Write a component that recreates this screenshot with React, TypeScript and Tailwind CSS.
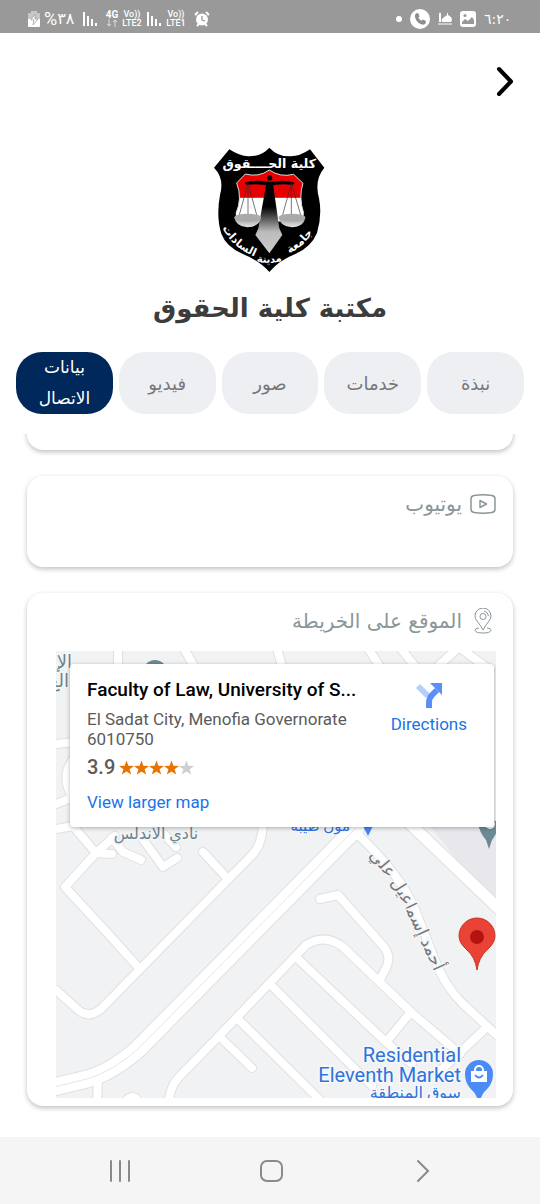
import React from "react";

const tabs = [
  { label: "نبذة", active: false },
  { label: "خدمات", active: false },
  { label: "صور", active: false },
  { label: "فيديو", active: false },
  { label: "بيانات الاتصال", active: true },
];

// narrow streets, drawn twice: grey casing first and the white surface on top
const streets = [
  "M56 829 L73 826 L96 853 L65 887 L112 938 L138 967",
  "M56 990 L76 1008 Q88 1020 101 1009 L253 854 Q263 843 263 820",
  "M96 853 L112 854",
  "M97 852 L115 836",
  "M112 838 L123 852 L141 860",
  "M142 838 L163 867 L177 858",
  "M164 834 L176 847",
  "M203 852 L228 879",
  "M98 1078 L97 1105",
  "M124 1106 Q128 1094 136 1098",
  "M168 1105 Q170 1086 179 1077 L220 1035 L306 945 Q325 933 343 947 L412 1013 L460 1054",
  "M219 1036 L252 1068",
  "M237 1018 L320 1100",
  "M271 985 L372 1086",
  "M298 959 L387 1043 L412 1064",
  "M387 1041 L410 1013",
  "M320 899 L338 895 L384 947 Q391 956 387 966 L381 978",
  "M354 831 Q401 874 416 912 L434 958 Q444 985 462 1003 L500 1038",
  "M487 1027 L440 1071",
  "M118 645 L118 670",
  "M182 645 L196 670",
  "M276 645 L283 670",
  "M366 645 L382 670",
  "M398 645 L418 670",
  "M456 645 L490 670",
  "M458 648 L436 668",
  "M56 744 L74 742",
  "M74 758 Q60 776 72 796",
  "M56 804 L74 797",
];

const avenue = "M406 820 L500 910";
const highway = "M50 1088 L87 1079 Q112 1072 138 1049 L356 828";

function SignalBars() {
  return (
    <svg className="h-4 w-4" viewBox="0 0 16 16" stroke="currentColor" strokeWidth="2">
      <path d="M2 1v14M6 5v10M10 8v7" />
      <path d="M14 12v3" />
    </svg>
  );
}

function Volte({ line }: { line: string }) {
  return (
    <span className="flex w-5 flex-col items-center font-['Roboto',sans-serif] text-[9px] font-medium leading-[9px]">
      <span>Vo))</span>
      <span>{line}</span>
    </span>
  );
}

function StatusBar() {
  return (
    <header
      dir="ltr"
      className="flex h-[33px] items-center justify-between bg-[#999999] pl-7 pr-7 pt-1 text-white"
    >
      <div className="flex items-center gap-1">
        <svg className="h-4 w-3" viewBox="0 0 12 16">
          <path d="M3 2V0h6v2h2q1 0 1 1v5H0V3q0-1 1-1z" fill="#fff" opacity="0.45" />
          <path d="M0 8h12v7q0 1-1 1H1q-1 0-1-1z" fill="#fff" />
          <path d="M7 3 3 9h3l-1 5 5-6H7z" fill="#fff" stroke="#999" strokeWidth="0.7" />
        </svg>
        <span className="flex w-[34px] items-center font-['Roboto','DejaVu_Sans',sans-serif] text-[18px] leading-5">
          %<span className="text-[16px]">٣٨</span>
        </span>
        <SignalBars />
        <span className="ml-1 flex w-3 flex-col items-center font-['Roboto',sans-serif] text-[10px] font-bold leading-[8px]">
          4G
          <svg className="h-2 w-3" viewBox="0 0 12 8" fill="none" stroke="#ddd">
            <path d="M3 0v7M1 5l2 2 2-2M9 8V1M7 3l2-2 2 2" />
          </svg>
        </span>
        <Volte line="LTE2" />
        <SignalBars />
        <Volte line="LTE1" />
        <svg className="ml-1 h-4 w-4" viewBox="0 0 16 16" fill="none">
          <circle cx="8" cy="8.500" r="6" fill="#fff" />
          <path d="M1 4 4 1M15 4l-3-3M3 15l2-2M13 15l-2-2" stroke="#fff" strokeWidth="2" />
          <path d="M8 5v4l3 1" stroke="#999" strokeWidth="1.300" />
        </svg>
      </div>
      <div className="flex items-center gap-2">
        <span className="h-[6px] w-[6px] rounded-full bg-white" />
        <svg className="h-5 w-5" viewBox="0 0 20 20">
          <circle cx="10" cy="10" r="10" fill="#fff" />
          <path
            d="M6 4.500 8 4l1.600 3.200L8.300 8.600q.9 2 3.100 3.100l1.400-1.300L16 12l-.5 2.500q-1 1.500-3.500 1-5.500-1.700-7-7.500-.3-2.500 1-3.500z"
            fill="#8d8d8d"
          />
        </svg>
        <svg className="h-4 w-[14px]" viewBox="0 0 14 16" fill="#fff">
          <path d="M1 3l1-2 1 2v8H1zM4 11q-1-3 1-4l4-3V2h1v2q4 2 4 5l-1 2z" />
          <path d="M0 12h14v2H0z" opacity="0.5" />
        </svg>
        <svg className="h-4 w-4" viewBox="0 0 16 16">
          <rect width="16" height="16" rx="3" fill="#fff" />
          <path d="M2 13v-2l3-3 3 2 4-4 2 3v4z" fill="#999" />
          <circle cx="5" cy="4.500" r="1.500" fill="#999" />
        </svg>
        <time className="w-7 font-['DejaVu_Sans',sans-serif] text-[14px] leading-5">٦:٢٠</time>
      </div>
    </header>
  );
}

function Crest() {
  return (
    <svg
      className="h-[145px] w-[140px] font-['DejaVu_Sans',sans-serif]"
      viewBox="0 0 420 435"
      role="img"
      aria-label="كلية الحقوق"
    >
      <defs>
        <linearGradient id="tie" x1="0" y1="0" x2="0" y2="1">
          <stop offset="0.35" stopColor="#000" />
          <stop offset="0.7" stopColor="#bbb" />
          <stop offset="1" stopColor="#ccc" />
        </linearGradient>
        <linearGradient id="pan" x1="0" y1="0" x2="0" y2="1">
          <stop offset="0" stopColor="#999" />
          <stop offset="1" stopColor="#e5e5e5" />
        </linearGradient>
        <clipPath id="field">
          <path d="M208 105Q176 128 136 117L110 144Q128 190 108 235Q98 290 165 337L208 372L256 332Q314 292 311 235Q295 185 309 145L281 118Q240 128 208 105z" />
        </clipPath>
        <path id="motto-left" d="M66 276Q92 334 166 366" />
        <path id="motto-base" d="M160 376Q207 392 256 374" />
        <path id="motto-right" d="M248 364Q316 339 348 274" />
      </defs>
      <path
        d="M208 38Q184 65 145 64Q118 63 88 43L42 98Q74 130 60 180Q48 245 64 296Q78 335 130 358Q180 378 208 411Q237 376 286 357Q333 337 351 294Q367 240 357 190Q342 135 373 98L330 43Q298 65 270 64Q233 65 208 38z"
        fill="#000"
      />
      <g clipPath="url(#field)">
        <path d="M90 90h240v98H90z" fill="#e90000" />
        <path d="M90 188h240v72H90z" fill="#fff" />
        <path d="M90 260h240v115H90z" fill="#000" />
      </g>
      <path
        d="M208 105Q176 128 136 117L110 144Q128 190 108 235M281 118Q240 128 208 105M281 118L309 145Q295 185 311 235"
        fill="none"
        stroke="#ddd"
        strokeWidth="3"
      />
      <path d="M200 140h18l20 140 9 20-39 55-42-55 9-20z" fill="url(#tie)" />
      <circle cx="209" cy="129" r="8" />
      <path d="M134 143Q175 132 209 142Q245 132 284 143L278 150Q240 145 209 153Q175 145 140 150z" />
      <path
        d="M144 145L117 243M144 145V243M144 145L171 243M274 145L247 243M274 145V243M274 145L303 243"
        fill="none"
        stroke="#333"
        strokeWidth="2"
      />
      <path d="M103 246q4 29 39 31 38-2 41-31zM236 246q4 29 39 31 38-2 41-31z" fill="url(#pan)" />
      <ellipse cx="143" cy="248" rx="40" ry="12" fill="#aaa" />
      <ellipse cx="276" cy="248" rx="40" ry="12" fill="#aaa" />
      <g fill="#fff" fontWeight="bold" textAnchor="middle" direction="rtl">
        <text x="208" y="98" fontSize="38">كلية الحــــقوق</text>
        <g fontSize="33">
          <text>
            <textPath href="#motto-left" startOffset="50%">السادات</textPath>
          </text>
          <text fontSize="30">
            <textPath href="#motto-base" startOffset="50%">مدينة</textPath>
          </text>
          <text>
            <textPath href="#motto-right" startOffset="50%">جامعة</textPath>
          </text>
        </g>
      </g>
    </svg>
  );
}

function Card({ children }: { children?: React.ReactNode }) {
  return (
    <section className="rounded-2xl bg-white shadow-[0_2px_5px_rgba(0,0,0,0.25)]">
      {children}
    </section>
  );
}

function CardTitle({ icon, title }: { icon: React.ReactNode; title: string }) {
  return (
    <h2 className="flex h-7 items-center gap-2 text-[20px] text-[#8b9699]">
      <span className="flex w-[26px] justify-center">{icon}</span>
      {title}
    </h2>
  );
}

function Stars() {
  const star =
    "M8 0 10 5.500 16 5.800 11.300 9.400 13 15 8 11.800 3 15 4.700 9.400 0 5.800 6 5.500z";
  return (
    <span className="flex" role="img" aria-label="3.9 / 5">
      {[1, 2, 3, 4, 5].map((n) => (
        <svg key={n} className="h-[15px] w-[15px]" viewBox="0 0 16 15">
          <path d={star} fill={n < 5 ? "#e77400" : "#cfcfcf"} />
        </svg>
      ))}
    </span>
  );
}

function PlaceCard() {
  return (
    <div className="absolute left-[14px] right-[2px] top-[13px] flex h-[163px] justify-between rounded-sm bg-white pl-[17px] pr-[27px] shadow-[0_1px_4px_rgba(0,0,0,0.3)]">
      <div>
        <h3 className="mt-3 text-[19px] font-medium leading-7 text-black">
          Faculty of Law, University of S...
        </h3>
        <p className="mt-[5px] w-[270px] text-[17px] leading-5 text-[#5b5b5b]">
          El Sadat City, Menofia Governorate 6010750
        </p>
        <div className="mt-[6px] flex items-center gap-1 text-[20px] font-medium leading-6 text-[#5b5b5b]">
          3.9
          <Stars />
        </div>
        <a href="#map" className="mt-[13px] block text-[17px] leading-5 text-[#1a73e8]">
          View larger map
        </a>
      </div>
      <a
        href="#directions"
        className="mt-4 flex flex-col items-center gap-1 self-start text-[17px] leading-6 text-[#1a73e8]"
      >
        <svg className="h-7 w-7" viewBox="0 0 28 28" fill="none">
          <path d="M3 6l10 10" stroke="#b9cffb" strokeWidth="6" />
          <path d="M14 29v-6q0-5 3-8l5-5" stroke="#5a8ff5" strokeWidth="6" />
          <path d="M15 3h12v12z" fill="#5a8ff5" />
        </svg>
        Directions
      </a>
    </div>
  );
}

function MapView() {
  return (
    <div dir="ltr" className="relative overflow-hidden font-['Roboto','DejaVu_Sans',sans-serif]">
      <svg className="block w-full" viewBox="56 651 440 447" role="img" aria-label="map">
        <defs>
          <path id="ismail-st" d="M362 850Q389 874 405 908Q420 940 438 980" />
        </defs>
        <path d="M56 651h440v447H56z" fill="#f1f2f4" />
        <path d="M425 820h75v94z" fill="#e8e7ec" />
        <g fill="none" strokeLinecap="round" strokeLinejoin="round">
          <g stroke="#dfe0e2" strokeWidth="10">
            {streets.map((d) => (
              <path key={d} d={d} />
            ))}
            <path d={avenue} strokeWidth="13" />
            <path d={highway} strokeWidth="19" />
          </g>
          <g stroke="#fff" strokeWidth="8">
            {streets.map((d) => (
              <path key={d} d={d} />
            ))}
            <path d={avenue} strokeWidth="11" />
            <path d={highway} strokeWidth="17" />
          </g>
          <path d={highway} stroke="#e6e7e9" />
        </g>
        <circle cx="155" cy="672" r="12" fill="#6c8a94" />
        <g fill="#6c838c" fontSize="18" stroke="#f4f5f7" strokeWidth="3" paintOrder="stroke">
          <text x="72" y="668" textAnchor="end">الإ</text>
          <text x="69" y="687" textAnchor="end">الع</text>
          <text x="156" y="839" fontSize="16" textAnchor="middle">نادي الأندلس</text>
          <text fontSize="17" fill="#75797c" textAnchor="middle">
            <textPath href="#ismail-st" startOffset="50%">أحمد إسماعيل علي</textPath>
          </text>
        </g>
        <path d="M360 820h16l-8 16z" fill="#4286f5" />
        <path d="M476 818q4 16 10 22l3 9 3-9q5-6 8-18z" fill="#6c8a94" />
        <circle cx="490" cy="824" r="5" fill="#fff" />
        <path
          d="M477 970Q475 957 467 950Q459 943 459 936A18 18 0 0 1 495 936Q495 943 487 950Q479 957 477 970z"
          fill="#ea4335"
          stroke="#c5352a"
        />
        <circle cx="477" cy="937" r="7" fill="#b31412" />
        <path
          d="M479 1104Q477 1094 470 1088Q465 1082 465 1074A14 14 0 0 1 493 1074Q493 1082 488 1088Q481 1094 479 1104z"
          fill="#4b8bf5"
        />
        <path d="M471 1071h16v11h-16z" fill="#fff" />
        <path d="M475 1072v-2a4 4 0 0 1 8 0v2" fill="none" stroke="#fff" strokeWidth="2" />
        <path d="M475 1075q4 5 8 0" fill="none" stroke="#4b8bf5" strokeWidth="2" />
        <g fill="#2f73dc" stroke="#f7f8fa" strokeWidth="3" paintOrder="stroke" textAnchor="end">
          <text fontSize="20">
            <tspan x="461" y="1062">Residential</tspan>
            <tspan x="461" y="1082">Eleventh Market</tspan>
          </text>
          <text x="461" y="1098" fontSize="16">سوق المنطقة</text>
          <text x="350" y="831" fontSize="15">مون طيبة</text>
          <text x="504" y="760" fontSize="14">ء</text>
          <text x="504" y="775" fontSize="14">و</text>
        </g>
      </svg>
      <PlaceCard />
    </div>
  );
}

function BottomNav() {
  return (
    <nav dir="ltr" className="flex h-[67px] items-center justify-between bg-[#f5f5f5] px-[106px]">
      <button aria-label="Recents">
        <svg className="h-7 w-7" viewBox="0 0 28 28" stroke="#8a8a8a" strokeWidth="2" strokeLinecap="round">
          <path d="M5 4v20M14 4v20M23 4v20" />
        </svg>
      </button>
      <button aria-label="Home">
        <svg className="h-7 w-7" viewBox="0 0 28 28" fill="none" stroke="#8a8a8a" strokeWidth="2">
          <rect x="5" y="4" width="21" height="20" rx="6" />
        </svg>
      </button>
      <button aria-label="Back">
        <svg
          className="h-7 w-7"
          viewBox="0 0 28 28"
          fill="none"
          stroke="#8a8a8a"
          strokeWidth="2"
          strokeLinecap="round"
        >
          <path d="M12 4l10 10L12 24" />
        </svg>
      </button>
    </nav>
  );
}

export default function App() {
  return (
    <div
      dir="rtl"
      className="flex min-h-screen flex-col bg-white font-['DejaVu_Sans',sans-serif]"
    >
      <StatusBar />
      <div className="flex px-6 pt-8">
        <button aria-label="رجوع">
          <svg
            className="h-8 w-[22px]"
            viewBox="0 0 22 32"
            fill="none"
            stroke="#000"
            strokeWidth="4"
            strokeLinecap="round"
            strokeLinejoin="round"
          >
            <path d="M5 4l12 12.500L5 29" />
          </svg>
        </button>
      </div>
      <div className="mt-[38px] flex flex-col items-center">
        <Crest />
        <h1 className="mt-2 text-[26px] font-bold leading-10 text-[#3c3c3c]">مكتبة كلية الحقوق</h1>
      </div>
      <div className="mt-6 grid grid-cols-5 gap-[6px] px-4">
        {tabs.map((tab) => (
          <button
            key={tab.label}
            className={
              tab.active
                ? "h-[62px] rounded-[26px] bg-[#00285a] px-4 text-[17px] leading-[31px] text-white"
                : "h-[62px] rounded-[26px] bg-[#eeeff3] px-4 text-[18px] leading-[31px] text-[#777777]"
            }
          >
            {tab.label}
          </button>
        ))}
      </div>
      <main className="mt-5 flex grow flex-col gap-[26px] overflow-hidden px-[27px] pb-[30px]">
        <div className="-mt-10">
          <Card>
            <div className="h-14" />
          </Card>
        </div>
        <Card>
          <div className="h-[91px] px-[17px] pt-[14px]">
            <CardTitle
              title="يوتيوب"
              icon={
                <svg className="h-5 w-[26px]" viewBox="0 0 26 20" fill="none" stroke="#8b9699">
                  <path
                    d="M4 1.500Q13 0 22 1.500Q25 2 25 5V15Q25 18 22 18.500Q13 20 4 18.500Q1 18 1 15V5Q1 2 4 1.500z"
                    strokeWidth="1.500"
                  />
                  <path d="M10 6.500v7l6.500-3.500z" strokeWidth="1.500" strokeLinejoin="round" />
                </svg>
              }
            />
          </div>
        </Card>
        <Card>
          <div className="px-[17px] pb-2 pt-[14px]">
            <CardTitle
              title="الموقع على الخريطة"
              icon={
                <svg className="h-[26px] w-[18px]" viewBox="0 0 18 26" fill="none" stroke="#8b9699">
                  <path d="M9 22Q7 18 3 13Q1 11 1 8A8 8 0 0 1 17 8Q17 11 15 13Q11 18 9 22z" />
                  <circle cx="9" cy="8.500" r="3" />
                  <path d="M10 3Q14 4 14.500 8" />
                  <path d="M5 20Q1 20 1 22.500Q2 25 9 25Q16 25 17 22.500Q17 20 13 20" />
                </svg>
              }
            />
            <div className="ml-3 mt-4">
              <MapView />
            </div>
          </div>
        </Card>
      </main>
      <BottomNav />
    </div>
  );
}
